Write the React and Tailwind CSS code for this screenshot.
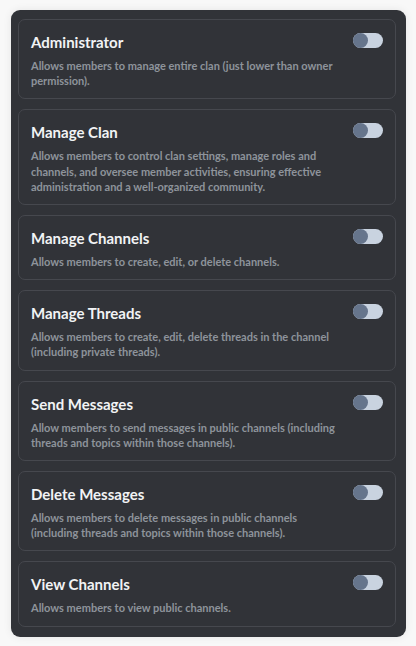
import React from "react";

const items = [
  { t: "Administrator", d: "Allows members to manage entire clan (just lower than owner permission)." },
  { t: "Manage Clan", d: "Allows members to control clan settings, manage roles and channels, and oversee member activities, ensuring effective administration and a well-organized community." },
  { t: "Manage Channels", d: "Allows members to create, edit, or delete channels." },
  { t: "Manage Threads", d: "Allows members to create, edit, delete threads in the channel (including private threads)." },
  { t: "Send Messages", d: "Allow members to send messages in public channels (including threads and topics within those channels)." },
  { t: "Delete Messages", d: "Allows members to delete messages in public channels (including threads and topics within those channels)." },
  { t: "View Channels", d: "Allows members to view public channels." },
];

function Toggle() {
  return (
    <div className="flex h-[15px] w-[30px] shrink-0 items-center rounded-full bg-[#c9d3e0]">
      <div className="h-[15px] w-[15px] rounded-full bg-[#66758c]" />
    </div>
  );
}

export default function App() {
  return (
    <div className="min-h-[646px] w-[416px] bg-[#f8f8f8] pl-[11px] pr-[10px] pt-[10px] pb-[10px]" style={{ fontFamily: 'Lato, "Noto Sans", sans-serif' }}>
      <div className="flex flex-col gap-[10px] rounded-[9px] bg-[#313338] pb-[10px] pl-[7px] pr-[10px] pt-[9px] shadow-[0_0_8px_rgba(0,0,0,0.08)]">
        {items.map((it) => (
          <div key={it.t} className="flex items-start gap-[11px] rounded-[7px] border border-[#46484e] bg-[#313338] pb-[10px] pl-[12px] pr-[12px] pt-[11px]">
            <div className="flex min-w-0 flex-1 flex-col gap-[5px]">
              <div className="text-[15px] font-bold leading-[22px] text-[#f2f3f5]">{it.t}</div>
              <div className="text-[11px] font-bold leading-[15.2px] text-[#8e939b]">{it.d}</div>
            </div>
            <div className="pt-[2px]"><Toggle /></div>
          </div>
        ))}
      </div>
    </div>
  );
}
